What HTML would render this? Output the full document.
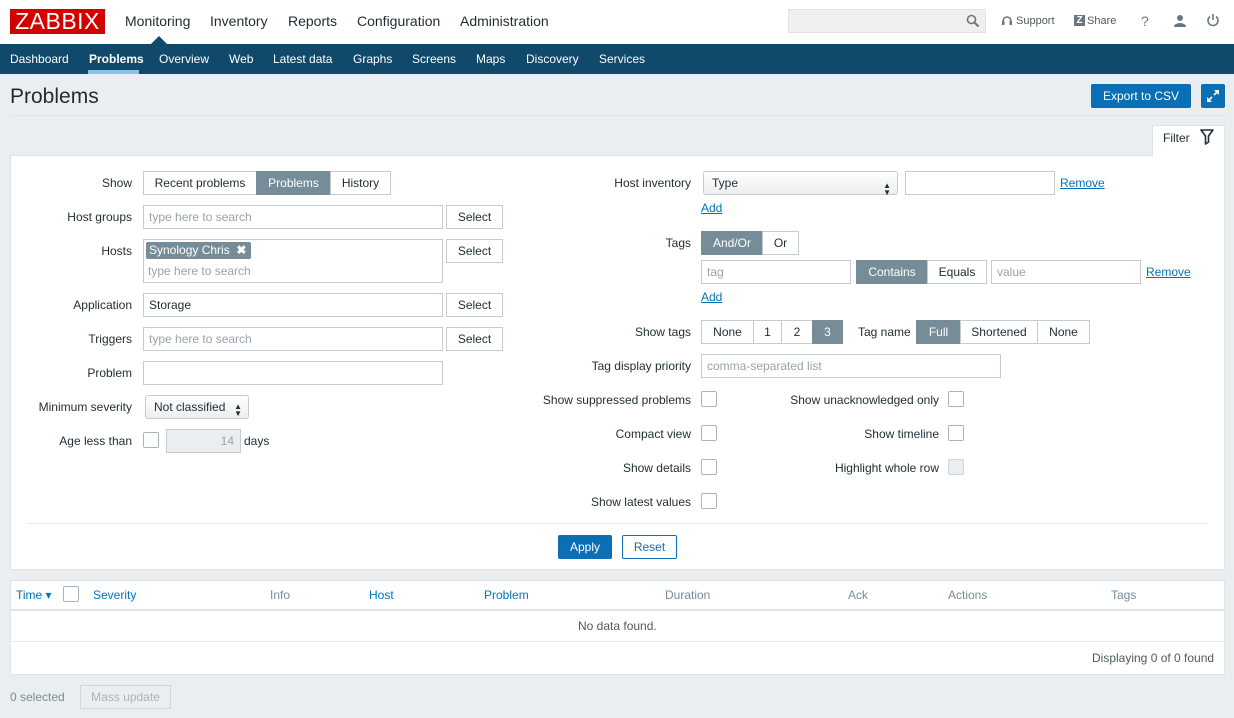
<!DOCTYPE html>
<html><head><meta charset="utf-8"><style>
*{box-sizing:border-box;margin:0;padding:0}
body{width:1234px;height:718px;overflow:hidden;background:#ebeef0;font-family:"Liberation Sans",Arial,sans-serif;font-size:12px;color:#1f2c33;position:relative}
.a{position:absolute}
.top{left:0;top:0;width:1234px;height:44px;background:#fff}
.logo{left:10px;top:9px;width:95px;height:25px;background:#d40000;color:#fff;font-size:23px;line-height:25px;text-align:center;letter-spacing:0.5px}
.mm{top:13px;font-size:14px;color:#1f2c33}
.nav{left:0;top:44px;width:1234px;height:30px;background:#10496a}
.sm{top:52px;color:#fff;font-size:12px}
.lbl{text-align:right;width:120px;left:12px}
.inp{background:#fff;border:1px solid #c5cbcf;height:24px;line-height:22px;padding-left:5px;color:#1f2c33}
.ph{color:#9aa3a8}
.btn{background:#fff;border:1px solid #c5cbcf;height:24px;line-height:22px;text-align:center;color:#1f2c33}
.sel{background:#768d99;color:#fff;border-color:#768d99}
.cb{width:16px;height:16px;border:1px solid #aab4b9;background:#fff;border-radius:2px}
.lnk{color:#0275b8;text-decoration:underline}
.th{top:588px;color:#768d99}
.thb{top:588px;color:#0275b8}
</style></head><body>
<div class="a top"></div>
<div class="a logo">ZABBIX</div>
<div class="a mm" style="left:125px">Monitoring</div>
<div class="a mm" style="left:210px">Inventory</div>
<div class="a mm" style="left:288px">Reports</div>
<div class="a mm" style="left:357px">Configuration</div>
<div class="a mm" style="left:460px">Administration</div>
<div class="a" style="left:151px;top:36px;width:0;height:0;border-left:8px solid transparent;border-right:8px solid transparent;border-bottom:8px solid #10496a"></div>
<div class="a" style="left:788px;top:9px;width:198px;height:24px;background:#efefef;border:1px solid #e2e2e2"></div>
<svg class="a" style="left:966px;top:14px" width="14" height="14" viewBox="0 0 14 14"><circle cx="5.5" cy="5.5" r="4" fill="none" stroke="#6b7780" stroke-width="1.6"/><path d="M8.5 8.5L12.5 12.5" stroke="#6b7780" stroke-width="2"/></svg>
<svg class="a" style="left:1001px;top:15px" width="12" height="12" viewBox="0 0 12 12"><path d="M2 8V6a4 4 0 0 1 8 0v2" fill="none" stroke="#6b7780" stroke-width="1.6"/><rect x="1" y="6" width="2.5" height="4" fill="#6b7780"/><rect x="8.5" y="6" width="2.5" height="4" fill="#6b7780"/></svg>
<div class="a" style="left:1016px;top:15px;color:#4f5a60;font-size:11px">Support</div>
<div class="a" style="left:1074px;top:15px;width:11px;height:11px;background:#6b7780;color:#fff;font-size:10px;font-weight:bold;line-height:11px;text-align:center">Z</div>
<div class="a" style="left:1087px;top:15px;color:#4f5a60;font-size:11px">Share</div>
<div class="a" style="left:1141px;top:13px;color:#6b7780;font-size:14px">?</div>
<svg class="a" style="left:1173px;top:14px" width="14" height="14" viewBox="0 0 14 14"><circle cx="7" cy="4" r="3" fill="#6b7780"/><path d="M1 13a6 4 0 0 1 12 0z" fill="#6b7780"/></svg>
<svg class="a" style="left:1206px;top:13px" width="14" height="14" viewBox="0 0 14 14"><path d="M4 3.5a5 5 0 1 0 6 0" fill="none" stroke="#6b7780" stroke-width="1.6"/><path d="M7 1v6" stroke="#6b7780" stroke-width="1.6"/></svg>
<div class="a nav"></div>
<div class="a sm" style="left:10px">Dashboard</div>
<div class="a sm" style="left:89px;font-weight:bold">Problems</div>
<div class="a" style="left:88px;top:70px;width:51px;height:4px;background:#7fc7ef"></div>
<div class="a sm" style="left:159px">Overview</div>
<div class="a sm" style="left:229px">Web</div>
<div class="a sm" style="left:273px">Latest data</div>
<div class="a sm" style="left:353px">Graphs</div>
<div class="a sm" style="left:412px">Screens</div>
<div class="a sm" style="left:476px">Maps</div>
<div class="a sm" style="left:526px">Discovery</div>
<div class="a sm" style="left:599px">Services</div>
<div class="a" style="left:10px;top:85px;font-size:21px;color:#1f2c33">Problems</div>
<div class="a" style="left:1091px;top:84px;width:100px;height:24px;background:#0b6fb6;border-radius:2px;color:#fff;line-height:24px;text-align:center">Export to CSV</div>
<div class="a" style="left:1201px;top:84px;width:24px;height:24px;background:#0b6fb6;border-radius:2px"></div>
<svg class="a" style="left:1205px;top:88px" width="16" height="16" viewBox="0 0 16 16"><path d="M9 2h5v5zM7 14H2V9z" fill="#fff"/><path d="M12 4L9 7M4 12l3-3" stroke="#fff" stroke-width="1.6"/></svg>
<div class="a" style="left:10px;top:115px;width:1215px;height:1px;background:#dfe4e7"></div>
<div class="a" style="left:1152px;top:125px;width:73px;height:32px;background:#fff;border:1px solid #dfe4e7;border-bottom:none"></div>
<div class="a" style="left:1163px;top:131px;font-size:12px">Filter</div>
<svg class="a" style="left:1200px;top:129px" width="14" height="16" viewBox="0 0 14 16"><path d="M1 1h12L8.5 7v6l-3 2V7z" fill="none" stroke="#1f2c33" stroke-width="1.6" stroke-linejoin="round"/></svg>
<div class="a" style="left:10px;top:155px;width:1215px;height:415px;background:#fff;border:1px solid #dfe4e7"></div>
<div class="a" style="left:1153px;top:154px;width:71px;height:3px;background:#fff"></div>

<div class="a lbl" style="top:176px">Show</div>
<div class="a btn" style="left:143px;top:171px;width:114px">Recent problems</div>
<div class="a btn sel" style="left:256px;top:171px;width:75px">Problems</div>
<div class="a btn" style="left:330px;top:171px;width:61px">History</div>
<div class="a lbl" style="top:210px">Host groups</div>
<div class="a inp ph" style="left:143px;top:205px;width:300px">type here to search</div>
<div class="a btn" style="left:446px;top:205px;width:57px">Select</div>
<div class="a lbl" style="top:244px">Hosts</div>
<div class="a inp" style="left:143px;top:239px;width:300px;height:44px"></div>
<div class="a" style="left:146px;top:242px;width:105px;height:17px;background:#768d99;color:#fff;line-height:17px;padding-left:3px;border-radius:2px">Synology Chris &nbsp;<b>✖</b></div>
<div class="a ph" style="left:148px;top:264px">type here to search</div>
<div class="a btn" style="left:446px;top:239px;width:57px">Select</div>
<div class="a lbl" style="top:298px">Application</div>
<div class="a inp" style="left:143px;top:293px;width:300px">Storage</div>
<div class="a btn" style="left:446px;top:293px;width:57px">Select</div>
<div class="a lbl" style="top:332px">Triggers</div>
<div class="a inp ph" style="left:143px;top:327px;width:300px">type here to search</div>
<div class="a btn" style="left:446px;top:327px;width:57px">Select</div>
<div class="a lbl" style="top:366px">Problem</div>
<div class="a inp" style="left:143px;top:361px;width:300px"></div>
<div class="a lbl" style="top:400px">Minimum severity</div>
<div class="a btn" style="left:145px;top:395px;width:104px;background:linear-gradient(#fff,#eceeef);border-radius:3px;text-align:left;padding-left:8px">Not classified <span style="position:absolute;right:6px;font-size:8px;line-height:10px;top:6px">▲<br></span><span style="position:absolute;right:6px;font-size:8px;top:7px">▼</span></div>
<div class="a lbl" style="top:434px">Age less than</div>
<div class="a cb" style="left:143px;top:432px"></div>
<div class="a inp" style="left:166px;top:429px;width:75px;background:#ebeef0;color:#9aa3a8;text-align:right;padding-right:6px">14</div>
<div class="a" style="left:244px;top:434px">days</div>

<div class="a" style="left:540px;top:176px;width:151px;text-align:right">Host inventory</div>
<div class="a btn" style="left:703px;top:171px;width:195px;background:linear-gradient(#fff,#eceeef);border-radius:3px;text-align:left;padding-left:8px">Type<span style="position:absolute;right:6px;font-size:8px;top:3px">▲</span><span style="position:absolute;right:6px;font-size:8px;top:10px">▼</span></div>
<div class="a inp" style="left:905px;top:171px;width:150px"></div>
<div class="a lnk" style="left:1060px;top:176px">Remove</div>
<div class="a lnk" style="left:701px;top:201px">Add</div>
<div class="a" style="left:540px;top:236px;width:151px;text-align:right">Tags</div>
<div class="a btn sel" style="left:701px;top:231px;width:62px">And/Or</div>
<div class="a btn" style="left:762px;top:231px;width:37px">Or</div>
<div class="a inp ph" style="left:701px;top:260px;width:150px">tag</div>
<div class="a btn sel" style="left:856px;top:260px;width:72px">Contains</div>
<div class="a btn" style="left:927px;top:260px;width:60px">Equals</div>
<div class="a inp ph" style="left:991px;top:260px;width:150px">value</div>
<div class="a lnk" style="left:1146px;top:265px">Remove</div>
<div class="a lnk" style="left:701px;top:290px">Add</div>
<div class="a" style="left:540px;top:325px;width:151px;text-align:right">Show tags</div>
<div class="a btn" style="left:701px;top:320px;width:53px">None</div>
<div class="a btn" style="left:753px;top:320px;width:29px">1</div>
<div class="a btn" style="left:781px;top:320px;width:32px">2</div>
<div class="a btn sel" style="left:812px;top:320px;width:31px">3</div>
<div class="a" style="left:858px;top:325px">Tag name</div>
<div class="a btn sel" style="left:916px;top:320px;width:45px">Full</div>
<div class="a btn" style="left:960px;top:320px;width:78px">Shortened</div>
<div class="a btn" style="left:1037px;top:320px;width:53px">None</div>
<div class="a" style="left:540px;top:359px;width:151px;text-align:right">Tag display priority</div>
<div class="a inp ph" style="left:701px;top:354px;width:300px">comma-separated list</div>
<div class="a" style="left:500px;top:393px;width:191px;text-align:right">Show suppressed problems</div>
<div class="a cb" style="left:701px;top:391px"></div>
<div class="a" style="left:750px;top:393px;width:189px;text-align:right">Show unacknowledged only</div>
<div class="a cb" style="left:948px;top:391px"></div>
<div class="a" style="left:500px;top:427px;width:191px;text-align:right">Compact view</div>
<div class="a cb" style="left:701px;top:425px"></div>
<div class="a" style="left:750px;top:427px;width:189px;text-align:right">Show timeline</div>
<div class="a cb" style="left:948px;top:425px"></div>
<div class="a" style="left:500px;top:461px;width:191px;text-align:right">Show details</div>
<div class="a cb" style="left:701px;top:459px"></div>
<div class="a" style="left:750px;top:461px;width:189px;text-align:right">Highlight whole row</div>
<div class="a cb" style="left:948px;top:459px;background:#ebeef0;border-color:#d0d5d8"></div>
<div class="a" style="left:500px;top:495px;width:191px;text-align:right">Show latest values</div>
<div class="a cb" style="left:701px;top:493px"></div>
<div class="a" style="left:28px;top:523px;width:1179px;height:1px;background:#e6e9eb"></div>
<div class="a" style="left:558px;top:535px;width:54px;height:24px;background:#0b6fb6;color:#fff;border-radius:2px;line-height:24px;text-align:center">Apply</div>
<div class="a" style="left:622px;top:535px;width:55px;height:24px;background:#fff;color:#0b6fb6;border:1px solid #0b6fb6;border-radius:2px;line-height:22px;text-align:center">Reset</div>

<div class="a" style="left:10px;top:580px;width:1215px;height:95px;background:#fff;border:1px solid #dfe4e7"></div>
<div class="a" style="left:11px;top:609px;width:1213px;height:2px;background:#dfe4e7"></div>
<div class="a" style="left:11px;top:641px;width:1213px;height:1px;background:#e6e9eb"></div>
<div class="a thb" style="left:16px">Time ▾</div>
<div class="a cb" style="left:63px;top:586px"></div>
<div class="a thb" style="left:93px">Severity</div>
<div class="a th" style="left:270px">Info</div>
<div class="a thb" style="left:369px">Host</div>
<div class="a thb" style="left:484px">Problem</div>
<div class="a th" style="left:665px">Duration</div>
<div class="a th" style="left:848px">Ack</div>
<div class="a th" style="left:948px">Actions</div>
<div class="a th" style="left:1111px">Tags</div>
<div class="a" style="left:578px;top:619px;color:#4f5a60">No data found.</div>
<div class="a" style="left:1092px;top:651px;color:#4f5a60">Displaying 0 of 0 found</div>
<div class="a" style="left:10px;top:690px;color:#768d99">0 selected</div>
<div class="a" style="left:80px;top:685px;width:91px;height:24px;border:1px solid #d0d5d8;color:#aab4b9;line-height:22px;text-align:center;background:#ebeef0">Mass update</div>
</body></html>
